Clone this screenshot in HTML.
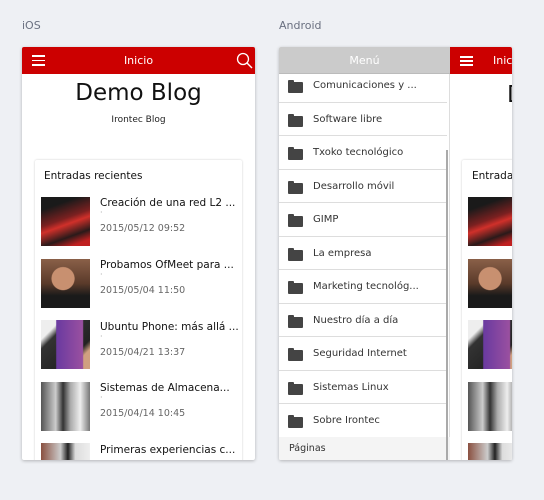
<!DOCTYPE html>
<html><head><meta charset="utf-8"><style>
*{margin:0;padding:0;box-sizing:border-box}
body{width:544px;height:500px;background:#eef0f4;font-family:"DejaVu Sans","Liberation Sans",sans-serif;position:relative;overflow:hidden}
.a{position:absolute}
.lbl{font-size:11px;color:#6a7080}
.frame{background:#fff;box-shadow:0 1px 3px rgba(0,0,0,.25);overflow:hidden;border-radius:2px}
.hdr{background:#cc0000;height:27px;color:#fff;font-size:11px}
.burger span{position:absolute;left:0;width:13px;height:1.6px;background:#fff}
.card{background:#fff;box-shadow:0 0 2px rgba(0,0,0,.2);border-radius:2px}
.t{font-size:10.5px;color:#111;white-space:nowrap}
.d{font-size:9.5px;color:#666}
.dot{font-size:8px;color:#999}
.row{position:absolute;left:0;width:168px;height:33.5px;border-bottom:1.5px solid #ddd;font-size:10px;color:#333}
.fold{position:absolute;left:9px;width:15px;height:11px;background:#444;border-radius:1px}
.fold:before{content:"";position:absolute;left:0;top:-2px;width:6px;height:3px;background:#444;border-radius:1px 1px 0 0}
.row .tx{position:absolute;left:34px;white-space:nowrap}
</style></head><body>
<div class="a lbl" style="left:22px;top:19px">iOS</div>
<div class="a lbl" style="left:279px;top:19px">Android</div>

<div class="a frame" style="left:22px;top:47px;width:233px;height:413px">
 <div class="a hdr" style="left:0;top:0;width:233px">
  <div class="a burger" style="left:10px;top:8px;width:13px;height:11px"><span style="top:0"></span><span style="top:4.5px"></span><span style="top:9px"></span></div>
  <div class="a" style="left:0;width:233px;text-align:center;top:7px">Inicio</div>
  <svg class="a" style="left:214px;top:5px" width="17" height="17" viewBox="0 0 17 17"><circle cx="7" cy="7" r="5.5" fill="none" stroke="#fff" stroke-width="1.3"/><line x1="11" y1="11" x2="16" y2="16" stroke="#fff" stroke-width="1.4"/></svg>
 </div>
 <div class="a" style="left:0;width:233px;text-align:center;top:33px;font-size:23px;color:#111">Demo Blog</div>
 <div class="a" style="left:0;width:233px;text-align:center;top:68px;font-size:9px;color:#222">Irontec Blog</div>
 <div class="a card" style="left:13px;top:113px;width:207px;height:320px">
  <div class="a" style="left:9px;top:10px;font-size:10.5px;color:#111">Entradas recientes</div>
 </div>
 <div class="a" style="left:19px;top:150px;width:49px;height:49px;background:linear-gradient(160deg,#1a1a1a 20%,#7a2020 45%,#d0302a 55%,#2a1a1a 75%,#c02020 90%)"></div>
 <div class="a t" style="left:78px;top:150px">Creación de una red L2 ...</div>
 <div class="a dot" style="left:78px;top:161px">·</div>
 <div class="a d" style="left:78px;top:176px">2015/05/12 09:52</div>
 <div class="a" style="left:19px;top:212px;width:49px;height:49px;background:radial-gradient(circle at 45% 40%,#c89070 0 28%,transparent 30%),linear-gradient(#8a6048,#5a3a2a 50%,#1a1a1a 75%)"></div>
 <div class="a t" style="left:78px;top:212px">Probamos OfMeet para ...</div>
 <div class="a dot" style="left:78px;top:223px">·</div>
 <div class="a d" style="left:78px;top:238px">2015/05/04 11:50</div>
 <div class="a" style="left:19px;top:273px;width:49px;height:49px;background:linear-gradient(90deg,transparent 30%,#6a3aa0 32%,#9a50a0 85%,transparent 87%),linear-gradient(135deg,#eee 20%,#333 30%,#222 70%,#d0a080 80%)"></div>
 <div class="a t" style="left:78px;top:274px">Ubuntu Phone: más allá ...</div>
 <div class="a dot" style="left:78px;top:285px">·</div>
 <div class="a d" style="left:78px;top:300px">2015/04/21 13:37</div>
 <div class="a" style="left:19px;top:335px;width:49px;height:49px;background:linear-gradient(90deg,#555,#ccc 30%,#333 45%,#aaa 60%,#eee 80%,#777)"></div>
 <div class="a t" style="left:78px;top:335px">Sistemas de Almacena...</div>
 <div class="a dot" style="left:78px;top:346px">·</div>
 <div class="a d" style="left:78px;top:361px">2015/04/14 10:45</div>
 <div class="a" style="left:19px;top:396px;width:49px;height:17px;background:linear-gradient(90deg,#8a5040,#ccc 40%,#222 55%,#ddd 70%,#eee)"></div>
 <div class="a t" style="left:78px;top:397px">Primeras experiencias c...</div>
</div>

<div class="a frame" style="left:279px;top:47px;width:233px;height:413px">
 <div class="a" style="left:171px;top:0;width:62px;height:413px;background:#fff">
  <div class="a hdr" style="left:0;top:0;width:62px">
   <div class="a burger" style="left:10px;top:9px;width:13px;height:10px"><span style="top:0"></span><span style="top:4px"></span><span style="top:8px"></span></div>
   <div class="a" style="left:43px;top:7px">Inicio</div>
  </div>
  <div class="a" style="left:57px;top:35px;font-size:23px;color:#111">D</div>
  <div class="a card" style="left:12px;top:113px;width:80px;height:320px"><div class="a" style="left:10px;top:10px;font-size:10.5px;color:#111">Entradas</div></div>
  <div class="a" style="left:18px;top:150px;width:49px;height:49px;background:linear-gradient(160deg,#1a1a1a 20%,#7a2020 45%,#d0302a 55%,#2a1a1a 75%,#c02020 90%)"></div>
  <div class="a" style="left:18px;top:212px;width:49px;height:49px;background:radial-gradient(circle at 45% 40%,#c89070 0 28%,transparent 30%),linear-gradient(#8a6048,#5a3a2a 50%,#1a1a1a 75%)"></div>
  <div class="a" style="left:18px;top:273px;width:49px;height:49px;background:linear-gradient(90deg,transparent 30%,#6a3aa0 32%,#9a50a0 85%,transparent 87%),linear-gradient(135deg,#eee 20%,#333 30%,#222 70%,#d0a080 80%)"></div>
  <div class="a" style="left:18px;top:335px;width:49px;height:49px;background:linear-gradient(90deg,#555,#ccc 30%,#333 45%,#aaa 60%,#eee 80%,#777)"></div>
  <div class="a" style="left:18px;top:396px;width:49px;height:17px;background:linear-gradient(90deg,#8a5040,#ccc 40%,#222 55%,#ddd 70%,#eee)"></div>
 </div>
 <div class="a" style="left:0;top:0;width:171px;height:413px;background:#fff;border-right:1px solid #ddd">
  <div class="a" style="left:0;top:0;width:171px;height:27px;background:#cbcbcb;color:#fff;font-size:11px;text-align:center;line-height:27px;border-bottom:1px solid #bbb">Menú</div>
  <div class="row" style="top:22px"><div class="fold" style="top:13px"></div><div class="tx" style="top:11px">Comunicaciones y ...</div></div>
  <div class="row" style="top:55.5px"><div class="fold" style="top:13px"></div><div class="tx" style="top:11px">Software libre</div></div>
  <div class="row" style="top:89px"><div class="fold" style="top:13px"></div><div class="tx" style="top:11px">Txoko tecnológico</div></div>
  <div class="row" style="top:122.5px"><div class="fold" style="top:13px"></div><div class="tx" style="top:11px">Desarrollo móvil</div></div>
  <div class="row" style="top:156px"><div class="fold" style="top:13px"></div><div class="tx" style="top:11px">GIMP</div></div>
  <div class="row" style="top:189.5px"><div class="fold" style="top:13px"></div><div class="tx" style="top:11px">La empresa</div></div>
  <div class="row" style="top:223px"><div class="fold" style="top:13px"></div><div class="tx" style="top:11px">Marketing tecnológ...</div></div>
  <div class="row" style="top:256.5px"><div class="fold" style="top:13px"></div><div class="tx" style="top:11px">Nuestro día a día</div></div>
  <div class="row" style="top:290px"><div class="fold" style="top:13px"></div><div class="tx" style="top:11px">Seguridad Internet</div></div>
  <div class="row" style="top:323.5px"><div class="fold" style="top:13px"></div><div class="tx" style="top:11px">Sistemas Linux</div></div>
  <div class="row" style="top:357px;border-bottom:none"><div class="fold" style="top:13px"></div><div class="tx" style="top:11px">Sobre Irontec</div></div>
  <div class="a" style="left:0;top:390px;width:171px;height:23px;background:#f4f4f4;font-size:9.5px;color:#333;padding:6px 0 0 10px">Páginas</div>
  <div class="a" style="left:167px;top:103px;width:2px;height:310px;background:#aaa"></div>
 </div>
</div>
</body></html>
